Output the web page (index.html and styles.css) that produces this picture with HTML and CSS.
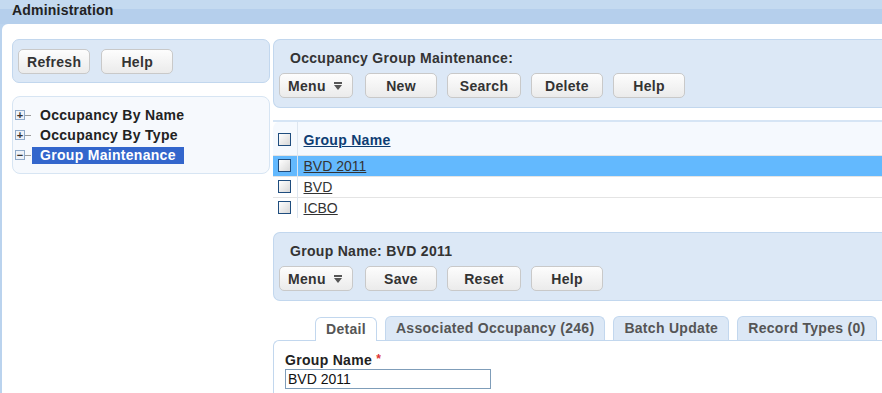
FILE: index.html
```html
<!DOCTYPE html>
<html lang="en">
<head>
  <meta charset="UTF-8">
  <title>Administration</title>
  <link rel="stylesheet" href="styles.css">
</head>
<body>

  <div class="topbar">Administration</div>

  <div class="page">
    <div class="left-col">
      <div class="panel tools">
        <button class="btn">Refresh</button>
        <button class="btn">Help</button>
      </div>

      <ul class="tree">
        <li><span class="expander">+</span><span class="node">Occupancy By Name</span></li>
        <li><span class="expander">+</span><span class="node">Occupancy By Type</span></li>
        <li><span class="expander">&minus;</span><span class="node selected">Group Maintenance</span></li>
      </ul>
    </div>

    <div class="right-col">
      <div class="panel toolbar">
        <h2>Occupancy Group Maintenance:</h2>
        <div class="buttons">
          <button class="btn menu-btn">Menu <svg width="8" height="8" viewBox="0 0 8 8"><rect x="0" y="0" width="8" height="2" fill="#555"/><polygon points="0,3 8,3 4,8" fill="#555"/></svg></button>
          <button class="btn">New</button>
          <button class="btn wide">Search</button>
          <button class="btn">Delete</button>
          <button class="btn">Help</button>
        </div>
      </div>

      <table class="grid">
        <thead>
          <tr>
            <th class="check-col"><span class="check"></span></th>
            <th><a href="#">Group Name</a></th>
          </tr>
        </thead>
        <tbody>
          <tr class="active">
            <td class="check-col"><span class="check"></span></td>
            <td><a href="#">BVD 2011</a></td>
          </tr>
          <tr>
            <td class="check-col"><span class="check"></span></td>
            <td><a href="#">BVD</a></td>
          </tr>
          <tr>
            <td class="check-col"><span class="check"></span></td>
            <td><a href="#">ICBO</a></td>
          </tr>
        </tbody>
      </table>

      <div class="panel toolbar">
        <h2>Group Name: BVD 2011</h2>
        <div class="buttons">
          <button class="btn menu-btn">Menu <svg width="8" height="8" viewBox="0 0 8 8"><rect x="0" y="0" width="8" height="2" fill="#555"/><polygon points="0,3 8,3 4,8" fill="#555"/></svg></button>
          <button class="btn">Save</button>
          <button class="btn wide">Reset</button>
          <button class="btn">Help</button>
        </div>
      </div>

      <div class="tabs">
        <span class="tab current">Detail</span>
        <span class="tab">Associated Occupancy (246)</span>
        <span class="tab">Batch Update</span>
        <span class="tab">Record Types (0)</span>
      </div>
      <div class="tab-body">
        <label for="group-name">Group Name <span class="req">*</span></label>
        <input type="text" id="group-name" value="BVD 2011">
      </div>
    </div>
  </div>

</body>
</html>
```

FILE: styles.css
```css
* {
  margin: 0;
  padding: 0;
  box-sizing: border-box;
}

body {
  font-family: "Liberation Sans", Arial, sans-serif;
  font-size: 14px;
  color: #333;
  background-color: #bad3ee;
  overflow: hidden;
  height: 393px;
}

.topbar {
  height: 24px;
  padding: 2px 0 0 12px;
  font-weight: bold;
  letter-spacing: 0.2px;
  color: #222;
  background: linear-gradient(#c4daf0 0, #c4daf0 9px, #b5cfec 9px, #b5cfec 100%);
}

.page {
  display: flex;
  gap: 3px;
  margin-left: 2px;
  height: 369px;
  padding: 15px 0 0 10px;
  background-color: #fff;
  border-top-left-radius: 6px;
}

.left-col {
  width: 258px;
  flex-shrink: 0;
}

.right-col {
  flex: 1;
  min-width: 0;
}

.panel {
  background-color: #dce8f6;
  border: 1px solid #c2d7ee;
  border-radius: 7px;
}

.right-col .panel {
  border-right: none;
  border-top-right-radius: 0;
  border-bottom-right-radius: 0;
}

.tools {
  display: flex;
  gap: 11px;
  height: 44px;
  padding: 9px 0 0 5px;
}

.btn {
  font-family: inherit;
  font-size: 14px;
  font-weight: bold;
  letter-spacing: 0.3px;
  color: #333;
  min-width: 72px;
  height: 25px;
  padding: 0 8px;
  background: linear-gradient(#fdfdfd, #ebebeb);
  border: 1px solid #c9c9c9;
  border-radius: 5px;
}

.btn.wide {
  min-width: 74px;
}

.menu-btn {
  min-width: 74px;
  margin-right: 2px;
  text-align: left;
}

.menu-btn svg {
  margin-left: 4px;
  vertical-align: 1px;
}

.tree {
  list-style: none;
  margin-top: 13px;
  height: 78px;
  padding: 8px 0 0 2px;
  background-color: #f6f9fd;
  border: 1px solid #d7e5f3;
  border-radius: 8px;
}

.tree li {
  display: flex;
  align-items: center;
  height: 20px;
  font-weight: bold;
  letter-spacing: 0.3px;
  color: #222;
}

.expander {
  position: relative;
  width: 10px;
  height: 10px;
  margin-right: 7px;
  font-size: 11px;
  line-height: 8px;
  letter-spacing: 0;
  text-align: center;
  color: #333;
  background-color: #eef2f8;
  border: 1px solid #8ea9c9;
}

.expander::after {
  content: "";
  position: absolute;
  left: 9px;
  top: 4px;
  width: 6px;
  height: 1px;
  background-color: #9a9a9a;
}

.node {
  padding: 0 8px;
  line-height: 17px;
}

.node.selected {
  color: #fff;
  background-color: #3366cc;
}

.toolbar {
  height: 69px;
  padding: 10px 0 0 5px;
}

.toolbar h2 {
  font-size: 14px;
  font-weight: bold;
  letter-spacing: 0.3px;
  color: #333;
  margin: 0 0 7px 11px;
}

.buttons {
  display: flex;
  gap: 10px;
}

.grid {
  width: 100%;
  margin: 12px 0 14px;
  border-collapse: collapse;
}

.grid th {
  height: 34px;
  padding-top: 3px;
  text-align: left;
  background-color: #f5f9fe;
  border-top: 2px solid #d6e5f5;
}

.grid thead th:first-child {
  border-top-left-radius: 8px;
}

.grid th a {
  color: #0e3d73;
  font-weight: bold;
  letter-spacing: 0.3px;
}

.grid td {
  height: 21px;
  border-top: 1px solid #e4e4e4;
}

.grid td a {
  color: #333;
}

.grid .check-col {
  width: 24px;
  padding-left: 5px;
  border-right: 1px solid #dde6f0;
}

.grid td:nth-child(2),
.grid th:nth-child(2) {
  padding-left: 6px;
}

.grid tr.active td {
  background-color: #63b9fe;
}

.check {
  display: block;
  width: 13px;
  height: 13px;
  border: 1px solid #1f4d7e;
  background: linear-gradient(135deg, #fff, #d8d8d8);
}

.tabs {
  display: flex;
  gap: 8px;
  margin: 15px 0 0 42px;
  height: 24px;
}

.tab {
  padding: 3px 10px 0;
  font-weight: bold;
  letter-spacing: 0.3px;
  color: #555;
  background-color: #dce8f6;
  border: 1px solid #c2d7ee;
  border-bottom: none;
  border-radius: 6px 6px 0 0;
}

.tab.current {
  background-color: #fff;
  position: relative;
  top: 1px;
  height: 24px;
}

.tab-body {
  height: 60px;
  padding: 11px 0 0 11px;
  border-top: 1px solid #c2d7ee;
  border-left: 1px solid #c2d7ee;
  border-top-left-radius: 6px;
}

.tab-body label {
  display: block;
  font-weight: bold;
  letter-spacing: 0.3px;
  color: #222;
}

.req {
  color: #d33;
  font-size: 12px;
  vertical-align: 2px;
}

.tab-body input {
  width: 206px;
  height: 20px;
  margin-top: 1px;
  padding: 0 2px;
  font-family: inherit;
  font-size: 14px;
  color: #111;
  border: 1px solid #7f9db9;
}
```
